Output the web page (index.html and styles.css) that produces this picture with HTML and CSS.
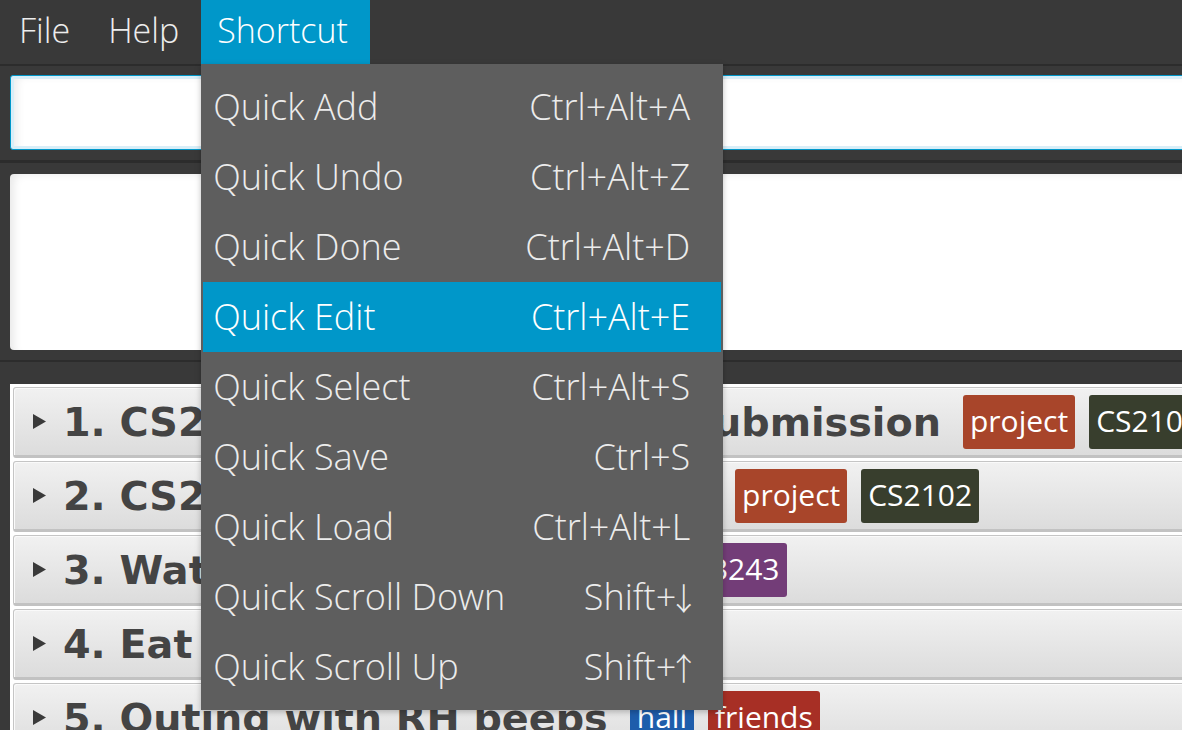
FILE: index.html
```html
<!DOCTYPE html>
<html lang="en">
<head>
<meta charset="utf-8">
<title>Task Manager</title>
<link rel="stylesheet" href="styles.css">
</head>
<body>
<div class="window">
  <nav class="menubar">
    <div class="menu">File</div>
    <div class="menu">Help</div>
    <div class="menu active">Shortcut
      <div class="dropdown">
        <div class="item"><span>Quick Add</span><span>Ctrl+Alt+A</span></div>
        <div class="item"><span>Quick Undo</span><span>Ctrl+Alt+Z</span></div>
        <div class="item"><span>Quick Done</span><span>Ctrl+Alt+D</span></div>
        <div class="item selected"><span>Quick Edit</span><span>Ctrl+Alt+E</span></div>
        <div class="item"><span>Quick Select</span><span>Ctrl+Alt+S</span></div>
        <div class="item"><span>Quick Save</span><span>Ctrl+S</span></div>
        <div class="item"><span>Quick Load</span><span>Ctrl+Alt+L</span></div>
        <div class="item"><span>Quick Scroll Down</span><span>Shift+<span class="arr">↓</span></span></div>
        <div class="item"><span>Quick Scroll Up</span><span>Shift+<span class="arr">↑</span></span></div>
      </div>
    </div>
  </nav>

  <section class="pane command-pane">
    <div class="command-box"></div>
  </section>

  <section class="pane result-pane">
    <div class="result-box"></div>
  </section>

  <section class="list-pane">
    <div class="list">
      <div class="card">
        <svg class="arrow" width="13" height="15" viewBox="0 0 13 15"><polygon points="0,0 13,7.5 0,15" /></svg>
        <span class="title">1. CS2103 Project Proposal Submission</span>
        <span class="tag t-red">project</span>
        <span class="tag t-olive">CS2103</span>
      </div>
      <div class="card">
        <svg class="arrow" width="13" height="15" viewBox="0 0 13 15"><polygon points="0,0 13,7.5 0,15" /></svg>
        <span class="title">2. CS2102 Group ER Diagram</span>
        <span class="tag t-red">project</span>
        <span class="tag t-olive">CS2102</span>
      </div>
      <div class="card">
        <svg class="arrow" width="13" height="15" viewBox="0 0 13 15"><polygon points="0,0 13,7.5 0,15" /></svg>
        <span class="title">3. Watch CS3243 Webcast</span>
        <span class="tag t-purple">CS3243</span>
      </div>
      <div class="card">
        <svg class="arrow" width="13" height="15" viewBox="0 0 13 15"><polygon points="0,0 13,7.5 0,15" /></svg>
        <span class="title">4. Eat lunch</span>
      </div>
      <div class="card">
        <svg class="arrow" width="13" height="15" viewBox="0 0 13 15"><polygon points="0,0 13,7.5 0,15" /></svg>
        <span class="title">5. Outing with RH beeps</span>
        <span class="tag t-blue">hall</span>
        <span class="tag t-crimson">friends</span>
      </div>
    </div>
  </section>
</div>
</body>
</html>
```

FILE: styles.css
```css
html, body {
  margin: 0;
  padding: 0;
  background: #393939;
  overflow: hidden;
}

.window {
  width: 1320px;
  height: 730px;
  display: flex;
  flex-direction: column;
  font-family: "Open Sans", "Noto Sans", sans-serif;
}

/* ---------- menu bar ---------- */
.menubar {
  display: flex;
  height: 64px;
  padding-left: 3px;
  background: #393939;
  border-bottom: 2px solid #2c2c2c;
  position: relative;
  z-index: 5;
}

.menu {
  position: relative;
  padding: 0 22px 0 16px;
  height: 64px;
  line-height: 60px;
  font-size: 34px;
  font-weight: 300;
  color: #ededed;
}

.menu.active {
  background: #0097c9;
  color: #ffffff;
}

.dropdown {
  position: absolute;
  left: 0;
  top: 64px;
  width: 522px;
  box-sizing: border-box;
  padding: 8px 2px;
  background: #5e5e5e;
  box-shadow: 0 2px 6px rgba(0, 0, 0, 0.25);
}

.item {
  display: flex;
  justify-content: space-between;
  align-items: center;
  height: 70px;
  line-height: 70px;
  padding: 0 31px 0 10px;
  font-size: 36px;
  font-weight: 300;
  color: #ececec;
}

.item.selected {
  background: #0097c9;
  color: #ffffff;
}

.arr {
  display: inline-block;
  font-family: "Noto Sans CJK JP", "Noto Sans CJK SC", "DejaVu Sans", sans-serif;
  font-weight: 300;
  font-size: 31px;
  line-height: 70px;
  vertical-align: top;
  margin: 0 -9px 0 -8px;
}

/* ---------- command + result panes ---------- */
.pane {
  padding-left: 10px;
}

.command-pane {
  padding-top: 9px;
  padding-bottom: 10px;
  border-bottom: 3px solid #2c2c2c;
}

.command-box {
  height: 75px;
  box-sizing: border-box;
  border: 1px solid #0097c9;
  border-radius: 3px;
  background: #ffffff;
  box-shadow: inset 0 0 0 3px #d8eef8, inset 10px 4px 8px -4px rgba(0, 0, 0, 0.08);
}

.result-pane {
  padding-top: 11px;
  padding-bottom: 10px;
  border-bottom: 2px solid #2c2c2c;
}

.result-box {
  height: 176px;
  border-radius: 4px 0 0 4px;
  background: #ffffff;
  box-shadow: inset 8px 4px 8px -4px rgba(0, 0, 0, 0.09);
}

/* ---------- task list ---------- */
.list-pane {
  padding: 22px 0 0 10px;
  flex: 1;
  min-height: 0;
}

.list {
  height: 100%;
  background: #ffffff;
  padding: 3px 0 0 3px;
  display: flex;
  flex-direction: column;
  gap: 3px;
}

.card {
  flex: none;
  display: flex;
  align-items: center;
  height: 71px;
  box-sizing: border-box;
  padding-left: 19px;
  border: 1px solid #c5c5c5;
  border-bottom: 3px solid #c2c2c2;
  border-radius: 3px;
  background: linear-gradient(#f1f1f1, #dcdcdc);
  box-shadow: inset 1px 1px 0 #fafafa;
}

.arrow {
  flex: none;
  fill: #3a3a3a;
  margin-right: 17px;
}

.title {
  font-family: "DejaVu Sans", "Verdana", sans-serif;
  font-weight: bold;
  font-size: 39.7px;
  color: #444444;
  white-space: nowrap;
  margin-right: 22px;
}

.tag {
  flex: none;
  height: 54px;
  line-height: 52px;
  padding: 0 7px;
  margin-right: 14px;
  border-radius: 3px;
  font-size: 30px;
  color: #ffffff;
  white-space: nowrap;
}

.t-red { background: #a8452a; }
.t-olive { background: #383e2d; }
.t-purple { background: #733d78; }
.t-blue { background: #1e5dab; }
.t-crimson { background: #a72f25; }
```
